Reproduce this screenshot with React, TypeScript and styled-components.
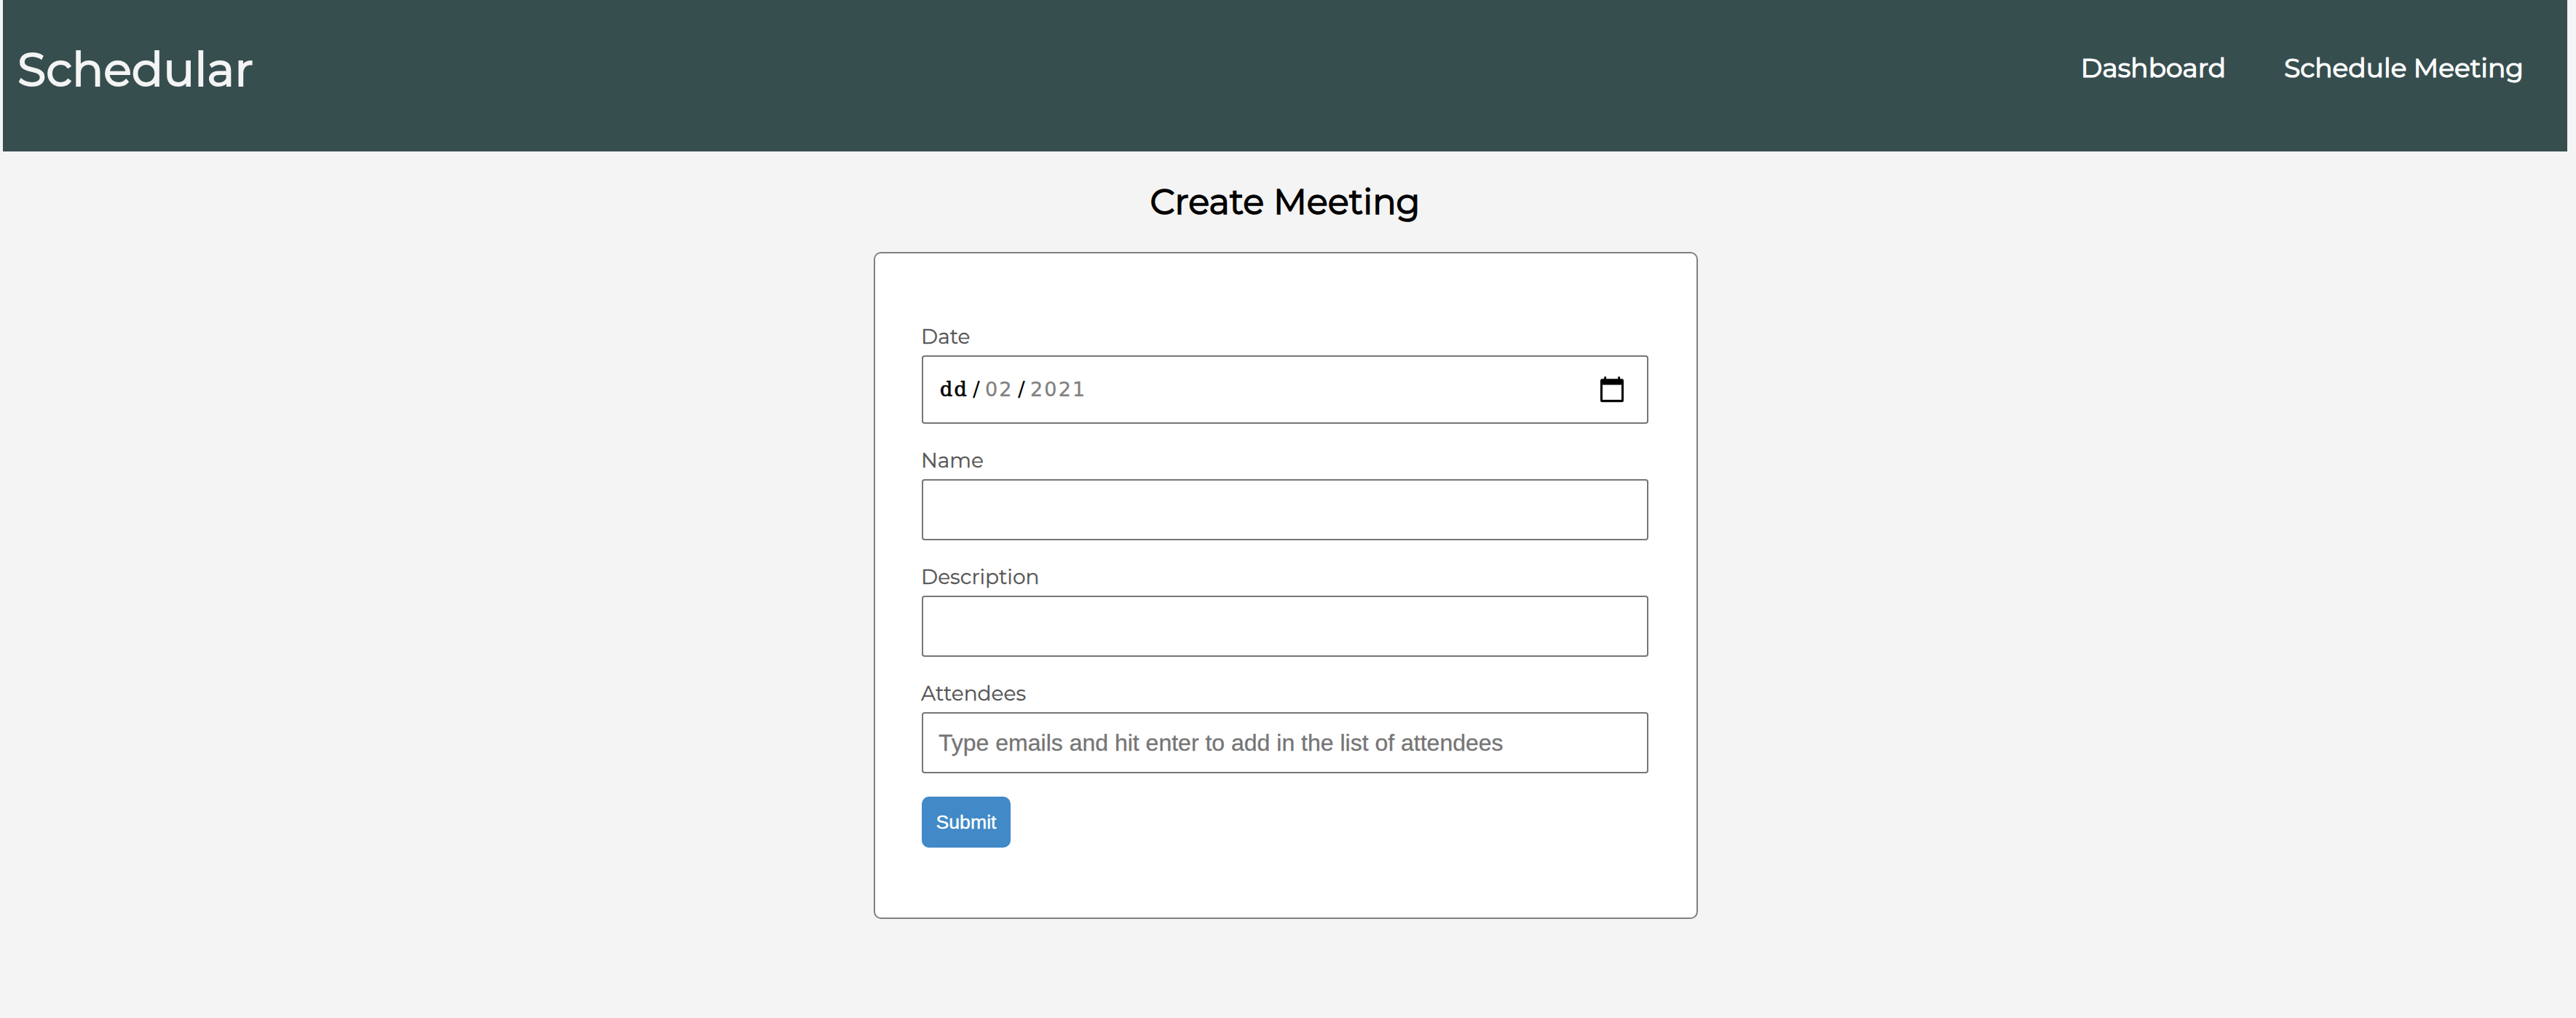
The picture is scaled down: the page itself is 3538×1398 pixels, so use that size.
import React from "react";
import styled, { createGlobalStyle } from "styled-components";

const GlobalStyle = createGlobalStyle`
  * { box-sizing: border-box; }
  body {
    margin: 0;
    background: #f4f4f4;
    font-family: Montserrat, Inter, sans-serif;
  }
`;

const Page = styled.div`
  min-height: 1398px;
  padding: 0 12px 0 4px;
  background: #f4f4f4;
`;

const Header = styled.header`
  display: flex;
  justify-content: space-between;
  align-items: flex-start;
  height: 208px;
  padding: 55px 60px 0 20px;
  background: #374e4f;
`;

const Brand = styled.div`
  font-size: 64px;
  line-height: 80px;
  color: #f4f4f4;
  -webkit-text-stroke: 2px #f4f4f4;
`;

const Nav = styled.nav`
  display: flex;
  gap: 80px;
  padding-top: 14px;
`;

const NavLink = styled.a`
  font-size: 36px;
  line-height: 48px;
  color: #fff;
  -webkit-text-stroke: 1.2px #fff;
  text-decoration: none;
  white-space: nowrap;
`;

const Main = styled.main`
  display: flex;
  flex-direction: column;
  align-items: center;
  margin-right: -2px;
`;

const Title = styled.h1`
  margin: 39px 2px 39px 0;
  font-size: 48px;
  font-weight: 400;
  line-height: 60px;
  color: #000;
  -webkit-text-stroke: 1.5px #000;
`;

const Card = styled.form`
  display: flex;
  flex-direction: column;
  align-items: flex-start;
  gap: 32px;
  width: 1132px;
  height: 916px;
  padding: 96px 66px 0 64px;
  border: 2px solid #808080;
  border-radius: 10px;
  background: #fff;
`;

const Field = styled.div`
  display: flex;
  flex-direction: column;
  gap: 8px;
  width: 998px;
`;

const Label = styled.label`
  margin-left: -1px;
  font-size: 28px;
  line-height: 36px;
  color: #555;
  -webkit-text-stroke: 0.3px #555;
`;

const Input = styled.input`
  width: 100%;
  height: 84px;
  padding: 0 21px;
  border: 2px solid #767676;
  border-radius: 4px;
  outline: none;
  background: #fff;
  font-family: Arial, "Liberation Sans", sans-serif;
  font-size: 32px;

  &::placeholder {
    color: #757575;
    opacity: 1;
    -webkit-text-stroke: 0.3px #757575;
  }
`;

const DateBox = styled.div`
  display: flex;
  align-items: center;
  justify-content: space-between;
  height: 94px;
  padding: 0 28px 0 23px;
  border: 2px solid #767676;
  border-radius: 4px;
  background: #fff;
`;

const DateText = styled.div`
  display: flex;
  align-items: baseline;
  margin-bottom: 2px;
  font-family: "DejaVu Sans", sans-serif;
  font-size: 27px;
  line-height: 40px;
`;

const Day = styled.span`
  width: 39px;
  font-family: "DejaVu Serif", serif;
  letter-spacing: 2.2px;
  -webkit-text-stroke: 0.7px #000;
`;

const Slash = styled.span`
  width: 22px;
  font-size: 29px;
  text-align: center;
  color: #000;
`;

const Digits = styled.span<{ $width: number }>`
  width: ${(p) => p.$width}px;
  padding-left: 1px;
  letter-spacing: 2.15px;
  color: #808080;
  -webkit-text-stroke: 0.3px #808080;
`;

const CalendarIcon = styled.svg`
  display: block;
  width: 40px;
  height: 40px;
`;

const Submit = styled.button`
  width: 122px;
  height: 70px;
  padding: 0;
  border: 0;
  border-radius: 10px;
  background: #4189c7;
  font-family: Arial, "Liberation Sans", sans-serif;
  font-size: 26.667px;
  color: #fff;
  -webkit-text-stroke: 0.4px #fff;
`;

const textFields = [
  { id: "name", label: "Name" },
  { id: "description", label: "Description" },
  {
    id: "attendees",
    label: "Attendees",
    placeholder: "Type emails and hit enter to add in the list of attendees",
  },
];

export default function App() {
  return (
    <>
      <GlobalStyle />
      <Page>
        <Header>
          <Brand>Schedular</Brand>
          <Nav>
            <NavLink>Dashboard</NavLink>
            <NavLink>Schedule Meeting</NavLink>
          </Nav>
        </Header>
        <Main>
          <Title>Create Meeting</Title>
          <Card>
            <Field>
              <Label>Date</Label>
              <DateBox>
                <DateText>
                  <Day>dd</Day>
                  <Slash>/</Slash>
                  <Digits $width={40}>02</Digits>
                  <Slash>/</Slash>
                  <Digits $width={84}>2021</Digits>
                </DateText>
                <CalendarIcon viewBox="0 0 40 40">
                  <path
                    fillRule="evenodd"
                    d="M9.200 2.300h2.800v3h16.300v-3h2.700v3h2.500a2.500 2.500 0 0 1 2.500 2.500v27a2.500 2.500 0 0 1-2.500 2.500h-27a2.500 2.500 0 0 1-2.500-2.500v-27a2.500 2.500 0 0 1 2.500-2.500h2.700zM7 13.600v20.400h26V13.600z"
                  />
                </CalendarIcon>
              </DateBox>
            </Field>
            {textFields.map((f) => (
              <Field key={f.id}>
                <Label htmlFor={f.id}>{f.label}</Label>
                <Input id={f.id} placeholder={f.placeholder} />
              </Field>
            ))}
            <Submit type="button">Submit</Submit>
          </Card>
        </Main>
      </Page>
    </>
  );
}
